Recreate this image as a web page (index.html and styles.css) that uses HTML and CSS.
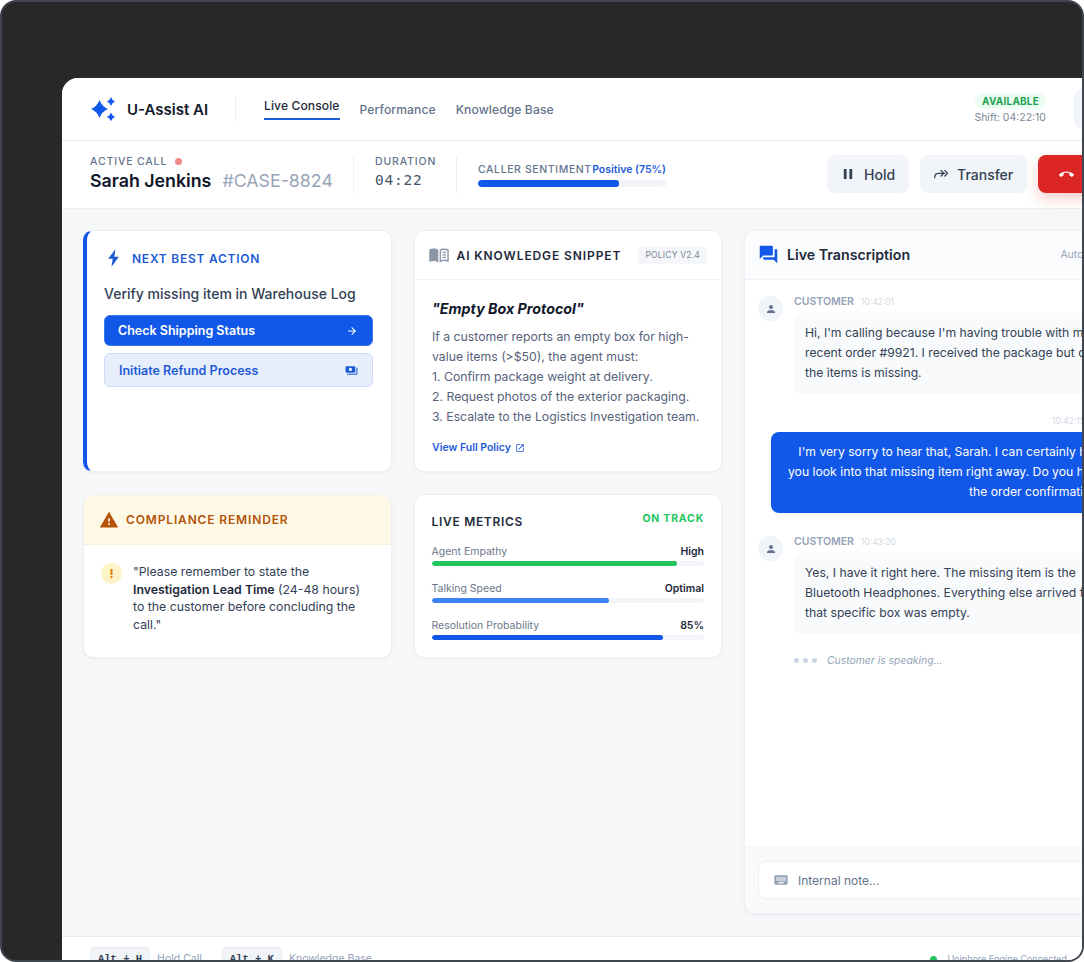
FILE: index.html
```html
<!DOCTYPE html>
<html lang="en">
<head>
<meta charset="utf-8">
<title>U-Assist AI</title>
<link rel="stylesheet" href="styles.css">
</head>
<body>
<div class="frame">
  <div class="app">
    <header class="topbar">
      <div class="brand">
        <svg class="brand-icon" viewBox="0 0 24 24"><path d="M8.500 3Q11 9.500 17 12 11 14.500 8.500 21 6 14.500 0 12 6 9.500 8.500 3z"/><path d="M20 0Q21 3.500 24 4.500 21 5.500 20 9 19 5.500 16 4.500 19 3.500 20 0z"/><path d="M20 15.500Q21 19 24 20 21 21 20 24.500 19 21 16 20 19 19 20 15.500z"/></svg>
        <span class="brand-name">U-Assist AI</span>
      </div>
      <nav class="nav">
        <a class="nav-link active">Live Console</a>
        <a class="nav-link">Performance</a>
        <a class="nav-link">Knowledge Base</a>
      </nav>
      <div class="status">
        <span class="badge-available">AVAILABLE</span>
        <span class="shift">Shift: 04:22:10</span>
      </div>
      <div class="square-btn"></div>
    </header>

    <section class="callbar">
      <div class="caller">
        <div class="label">ACTIVE CALL <i class="rec-dot"></i></div>
        <div class="caller-name"><strong>Sarah Jenkins</strong><span class="case">#CASE-8824</span></div>
      </div>
      <div class="duration">
        <div class="label">DURATION</div>
        <div class="time">04:22</div>
      </div>
      <div class="sentiment">
        <div class="sentiment-head"><span class="sentiment-label">CALLER SENTIMENT</span><span class="sentiment-val">Positive (75%)</span></div>
        <div class="track track-tall"><div class="fill fill-primary" style="width:75%"></div></div>
      </div>
      <div class="actions">
        <button class="action"><svg class="ic14" viewBox="2 2 20 20"><path d="M6 19h4V5H6v14zm8-14v14h4V5h-4z"/></svg>Hold</button>
        <button class="action"><svg class="ic14 stroke" viewBox="2 3 20 20"><path d="M3 19v-1.500c0-3.500 2.500-5.500 6-5.500h9"/><path d="M11.500 7.500 16 12l-4.500 4.500"/><path d="M17 7.500 21.500 12 17 16.500"/></svg>Transfer</button>
        <button class="action action-end"><svg class="ic15" viewBox="0 0 24 24"><path d="M12 9c-1.600 0-3.150.25-4.600.72v3.100c0 .39-.23.74-.56.9-.98.49-1.870 1.120-2.660 1.850-.18.18-.43.28-.7.28-.28 0-.53-.11-.71-.29L.29 13.080c-.18-.17-.29-.42-.29-.7 0-.28.11-.53.29-.71C3.340 8.780 7.460 7 12 7s8.660 1.780 11.710 4.670c.18.18.29.43.29.71 0 .28-.11.53-.29.71l-2.480 2.480c-.18.18-.43.29-.71.29-.27 0-.52-.11-.7-.28-.79-.74-1.690-1.360-2.670-1.850-.33-.16-.56-.5-.56-.9v-3.100C15.150 9.250 13.600 9 12 9z"/></svg>End Call</button>
      </div>
    </section>

    <main class="board">
      <article class="card card-action">
        <h2 class="action-title"><svg class="ic-bolt" viewBox="0 0 15 22"><path d="M10 0 1 12H6.500L5 22 14 9.500H8.500L10 0z"/></svg>NEXT BEST ACTION</h2>
        <p class="action-text">Verify missing item in Warehouse Log</p>
        <button class="wide-btn wide-primary">Check Shipping Status<svg class="ic12" viewBox="0 0 24 24"><path d="M12 4l-1.410 1.410L16.170 11H4v2h12.170l-5.580 5.590L12 20l8-8z"/></svg></button>
        <button class="wide-btn wide-soft">Initiate Refund Process<svg class="ic13" viewBox="0 0 24 24"><path d="M19 14V6c0-1.100-.9-2-2-2H3c-1.100 0-2 .9-2 2v8c0 1.100.9 2 2 2h14c1.100 0 2-.9 2-2zm-9-1c-1.660 0-3-1.340-3-3s1.340-3 3-3 3 1.340 3 3-1.340 3-3 3zm13-6v11c0 1.100-.9 2-2 2H4v-2h17V7h2z"/></svg></button>
      </article>

      <article class="card">
        <header class="card-head">
          <svg class="ic-book" viewBox="0 0 24 20"><path d="M11.200 3.200C9.700 2 7.600 1.500 5.500 1.500c-1.700 0-3.300.3-4.700 1-.3.2-.5.400-.5.800v13.600c0 .6.500.9 1 .7 1.300-.6 2.800-.9 4.200-.9 1.900 0 3.800.5 5.100 1.500l.6.400V3.200z"/><path d="M12.800 3.200c1.500-1.200 3.600-1.700 5.700-1.700 1.700 0 3.300.3 4.700 1 .3.2.5.4.5.8v13.600c0 .6-.5.900-1 .7-1.300-.6-2.800-.9-4.200-.9-1.900 0-3.800.5-5.100 1.500l-.6.400V3.200zm1.600 1v11.600c1.300-.6 2.800-.9 4.100-.9 1.200 0 2.300.2 3.500.5V4.200c-1.100-.5-2.300-.7-3.500-.7-1.500 0-3 .2-4.100.7zm1.600 1.800v1.300c1.500-.5 3.100-.5 4.500-.2V5.800c-1.500-.3-3.100-.2-4.500.2zm0 3v1.300c1.500-.5 3.100-.5 4.500-.2V8.800c-1.500-.3-3.100-.2-4.500.2zm0 3v1.300c1.500-.5 3.100-.5 4.500-.2v-1.300c-1.500-.3-3.100-.2-4.500.2z" fill-rule="evenodd"/></svg>
          <h2 class="snippet-title">AI KNOWLEDGE SNIPPET</h2>
          <span class="policy">POLICY V2.4</span>
        </header>
        <div class="snippet-body">
          <h3 class="protocol">"Empty Box Protocol"</h3>
          <p class="protocol-text">If a customer reports an empty box for high-value items (&gt;$50), the agent must:<br>1. Confirm package weight at delivery.<br>2. Request photos of the exterior packaging.<br>3. Escalate to the Logistics Investigation team.</p>
          <a class="policy-link">View Full Policy<svg class="ic10" viewBox="0 0 24 24"><path d="M19 19H5V5h7V3H5c-1.110 0-2 .9-2 2v14c0 1.100.89 2 2 2h14c1.100 0 2-.9 2-2v-7h-2v7zM14 3v2h3.590l-9.830 9.830 1.410 1.410L19 6.410V10h2V3h-7z"/></svg></a>
        </div>
      </article>

      <section class="card chat">
        <header class="chat-head">
          <svg class="ic-forum" viewBox="0 0 24 24"><path d="M21 6h-2v9H6v2c0 .55.45 1 1 1h11l4 4V7c0-.55-.45-1-1-1zm-4 6V3c0-.55-.45-1-1-1H3c-.55 0-1 .45-1 1v14l4-4h10c.55 0 1-.45 1-1z"/></svg>
          <h2 class="chat-title">Live Transcription</h2>
          <span class="auto">Auto-scroll</span>
        </header>
        <div class="chat-body">
          <div class="msg">
            <div class="avatar"><svg class="ic12" viewBox="0 0 24 24"><path d="M12 12c2.210 0 4-1.790 4-4s-1.790-4-4-4-4 1.790-4 4 1.790 4 4 4zm0 2c-2.670 0-8 1.340-8 4v2h16v-2c0-2.660-5.330-4-8-4z"/></svg></div>
            <div class="msg-main">
              <div class="meta"><b>CUSTOMER</b><span>10:42:01</span></div>
              <p class="bubble">Hi, I'm calling because I'm having trouble with my<br>recent order #9921. I received the package but one of<br>the items is missing.</p>
            </div>
          </div>
          <div class="msg-agent">
            <div class="meta-agent">10:42:15</div>
            <p class="bubble-agent">I'm very sorry to hear that, Sarah. I can certainly help<br>you look into that missing item right away. Do you have<br>the order confirmation?</p>
          </div>
          <div class="msg">
            <div class="avatar"><svg class="ic12" viewBox="0 0 24 24"><path d="M12 12c2.210 0 4-1.790 4-4s-1.790-4-4-4-4 1.790-4 4 1.790 4 4 4zm0 2c-2.670 0-8 1.340-8 4v2h16v-2c0-2.660-5.330-4-8-4z"/></svg></div>
            <div class="msg-main">
              <div class="meta"><b>CUSTOMER</b><span>10:43:20</span></div>
              <p class="bubble">Yes, I have it right here. The missing item is the<br>Bluetooth Headphones. Everything else arrived fine, but<br>that specific box was empty.</p>
            </div>
          </div>
          <div class="typing"><i></i><i></i><i></i><em>Customer is speaking...</em></div>
        </div>
        <footer class="chat-foot">
          <div class="note">
            <svg class="ic-kb" viewBox="0 0 24 24"><path d="M20 5H4c-1.100 0-1.990.9-1.990 2L2 17c0 1.100.9 2 2 2h16c1.100 0 2-.9 2-2V7c0-1.100-.9-2-2-2zm-9 3h2v2h-2V8zm0 3h2v2h-2v-2zM8 8h2v2H8V8zm0 3h2v2H8v-2zm-1 2H5v-2h2v2zm0-3H5V8h2v2zm9 7H8v-2h8v2zm0-4h-2v-2h2v2zm0-3h-2V8h2v2zm3 3h-2v-2h2v2zm0-3h-2V8h2v2z"/></svg>
            <span>Internal note...</span>
          </div>
        </footer>
      </section>

      <article class="card">
        <header class="comp-head">
          <svg class="ic-warn" viewBox="0 0 24 24"><path d="M1 21h22L12 2 1 21zm12-3h-2v-2h2v2zm0-4h-2v-4h2v4z"/></svg>
          <h2 class="comp-title">COMPLIANCE REMINDER</h2>
        </header>
        <div class="comp-body">
          <span class="bang">!</span>
          <p class="comp-text">"Please remember to state the <strong>Investigation Lead Time</strong> (24-48 hours) to the customer before concluding the call."</p>
        </div>
      </article>

      <article class="card metrics">
        <header class="metrics-head"><h2 class="metrics-title">LIVE METRICS</h2><span class="on-track">ON TRACK</span></header>
        <div class="metric">
          <div class="metric-row"><span>Agent Empathy</span><b>High</b></div>
          <div class="track"><div class="fill fill-green" style="width:90%"></div></div>
        </div>
        <div class="metric">
          <div class="metric-row"><span>Talking Speed</span><b>Optimal</b></div>
          <div class="track"><div class="fill fill-blue" style="width:65%"></div></div>
        </div>
        <div class="metric">
          <div class="metric-row"><span>Resolution Probability</span><b>85%</b></div>
          <div class="track"><div class="fill fill-primary" style="width:85%"></div></div>
        </div>
      </article>
    </main>

    <footer class="statusbar">
      <kbd class="key">Alt + H</kbd><span class="key-label">Hold Call</span>
      <kbd class="key key-second">Alt + K</kbd><span class="key-label">Knowledge Base</span>
      <span class="engine"><i class="engine-dot"></i>Uniphore Engine Connected</span>
    </footer>
  </div>
</div>
</body>
</html>
```
FILE: styles.css
```css
* { box-sizing: border-box; }
html, body { margin: 0; padding: 0; background: #fff; }
body { font-family: Inter, "Liberation Sans", sans-serif; color: #1e293b; }
h2, h3, p { margin: 0; }
svg { fill: currentColor; flex: none; display: block; }

.frame {
  width: 1084px; height: 962px;
  background: #282828;
  border: 2px solid #3f4650;
  border-radius: 16px;
  overflow: hidden;
  padding: 76px 0 0 60px;
}
.app {
  width: 1094px; height: 902px;
  background: #f6f7f9;
  border-radius: 16px 0 0 0;
  display: flex; flex-direction: column;
  overflow: hidden;
}

/* top bar */
.topbar {
  height: 63px; flex: none;
  background: #fff;
  border-bottom: 1px solid #e8ecf2;
  display: flex; align-items: center;
  padding: 0 0 0 28px;
}
.brand { display: flex; align-items: center; gap: 12px; width: 146px; height: 24px; border-right: 1px solid #e8ecf2; }
.brand-icon { width: 24px; height: 24px; margin-left: 1px; color: #1258e8; }
.brand-name { font-size: 15px; font-weight: 600; color: #0f172a; }
.nav { display: flex; align-items: center; gap: 20px; margin-left: 28px; }
.nav-link { font-size: 12.100px; font-weight: 500; color: #64748b; letter-spacing: .1px; }
.nav-link.active { color: #1e293b; padding-bottom: 5px; border-bottom: 2px solid #1d5ad6; }
.status { margin-left: auto; display: flex; flex-direction: column; align-items: flex-end; gap: 2px; }
.badge-available { font-size: 10px; font-weight: 700; color: #22a352; background: #ecfdf3; border-radius: 8px; padding: 2px 7px; line-height: 12px; letter-spacing: .2px; }
.shift { font-size: 10.500px; color: #7c8798; line-height: 14px; }
.square-btn { width: 40px; height: 40px; margin: 0 42px 0 28px; border-radius: 8px; background: #f1f5f9; }

/* call bar */
.callbar {
  height: 68px; flex: none;
  background: #fff;
  border-bottom: 1px solid #eceff3;
  display: flex; align-items: center;
  padding: 0 0 0 28px;
}
.callbar > * { flex: none; }
.label { font-size: 10.500px; font-weight: 500; color: #64748b; letter-spacing: .85px; line-height: 9px; white-space: nowrap; margin-bottom: 3px; }
.rec-dot { display: inline-block; width: 7px; height: 7px; border-radius: 50%; background: #f08a8a; margin-left: 4px; }
.caller { width: 264px; height: 36px; border-right: 1px solid #eceff3; }
.caller-name { display: flex; gap: 11px; align-items: baseline; line-height: 24px; }
.caller-name strong { font-size: 17.800px; font-weight: 600; color: #0f172a; }
.case { font-size: 17.800px; color: #98a4b8; }
.duration { width: 103px; height: 36px; padding-left: 21px; border-right: 1px solid #eceff3; }
.time { font-family: "DejaVu Sans Mono", "Liberation Mono", monospace; font-size: 14.500px; color: #475569; line-height: 22px; letter-spacing: .8px; }
.sentiment { width: 188px; margin-left: 21px; }
.sentiment-head { display: flex; justify-content: space-between; align-items: center; height: 14px; margin-bottom: 3px; }
.sentiment-label { font-size: 10.500px; font-weight: 500; color: #64748b; letter-spacing: .6px; white-space: nowrap; }
.sentiment-val { font-size: 10.500px; font-weight: 600; color: #1d5ad6; white-space: nowrap; }
.track { height: 5px; background: #f1f5f9; border-radius: 3px; overflow: hidden; }
.track-tall { height: 7px; border-radius: 4px; }
.fill { height: 100%; border-radius: 3px; }
.fill-primary { background: #1258e8; }
.fill-green { background: #22c55e; }
.fill-blue { background: #3b82f6; }
.actions { display: flex; gap: 11px; margin-left: 161px; margin-top: -1px; }
.action {
  height: 38px; border: 0; border-radius: 8px;
  background: #f1f5f9; color: #334155;
  font: 500 14px Inter, sans-serif;
  display: flex; align-items: center; gap: 9px;
  padding: 0 14px;
  white-space: nowrap;
}
.action-end { background: #dc2626; color: #fff; box-shadow: 0 6px 14px rgba(220, 38, 38, .22); padding: 0 21px; }
.ic14 { width: 14px; height: 14px; }
.ic15 { width: 15px; height: 15px; }
.ic12 { width: 12px; height: 12px; }
.ic13 { width: 13px; height: 13px; }
.ic10 { width: 10px; height: 10px; }
.stroke { fill: none; stroke: currentColor; stroke-width: 1.800; }

/* board */
.board {
  flex: 1; min-height: 0;
  display: grid;
  grid-template-columns: 308.500px 308.500px 1fr;
  grid-template-rows: 242px 164px 1fr;
  column-gap: 22px; row-gap: 22px;
  padding: 21px 21px 22px;
}
.card {
  background: #fff;
  border: 1px solid #edf0f4;
  border-radius: 10px;
  box-shadow: 0 1px 3px rgba(15, 23, 42, .05);
  overflow: hidden;
  min-width: 0;
}

.card-action { border-left: 4px solid #1258e8; padding: 16px 18px 0 17px; }
.action-title { display: flex; align-items: center; gap: 11px; font-size: 12px; font-weight: 600; letter-spacing: .75px; color: #1d5ad6; margin-left: 2px; height: 22px; }
.ic-bolt { width: 15px; height: 18px; color: #1d5ad6; }
.action-text { font-size: 14px; font-weight: 500; color: #334155; margin-top: 16px; line-height: 18px; }
.wide-btn {
  width: 100%; display: flex; justify-content: space-between; align-items: center;
  border-radius: 6px; font: 600 12.500px Inter, sans-serif;
}
.wide-primary { height: 31px; margin-top: 12px; background: #1258e8; border: 1px solid #3b78ee; color: #fff; padding: 0 14px 0 13px; }
.wide-soft { height: 34px; margin-top: 7px; background: #e7eefc; border: 1px solid #cddcf7; color: #1d5ad6; padding: 0 14px; }

.card-head { height: 49px; display: flex; align-items: center; padding: 0 14px; border-bottom: 1px solid #f1f4f7; }
.ic-book { width: 20px; height: 17px; color: #8b97a8; }
.snippet-title { font-size: 12px; font-weight: 600; letter-spacing: .9px; color: #1e293b; margin-left: 8px; }
.policy { margin-left: auto; font-size: 8.500px; color: #7c8798; background: #f4f6f9; border-radius: 4px; padding: 0 7px; line-height: 17px; letter-spacing: .2px; }
.snippet-body { padding: 19px 17.500px 0; }
.protocol { font-size: 14.250px; font-style: italic; font-weight: 700; color: #0f172a; line-height: 20px; }
.protocol-text { font-size: 12.250px; line-height: 20px; color: #56627a; margin-top: 8px; }
.policy-link { display: flex; align-items: center; gap: 4px; margin-top: 14px; font-size: 10.500px; font-weight: 600; color: #1d5ad6; line-height: 14px; }

.comp-head { height: 50px; background: #fef9e7; display: flex; align-items: center; gap: 7px; padding: 0 15px; border-bottom: 1px solid #f6f0dc; }
.ic-warn { width: 20px; height: 20px; color: #b45309; }
.comp-title { font-size: 12px; font-weight: 600; letter-spacing: .85px; color: #b45309; }
.comp-body { display: flex; gap: 11px; padding: 18px 17px 0; }
.bang { flex: none; width: 21px; height: 21px; border-radius: 50%; background: #fef3c7; color: #d97706; font-size: 12px; font-weight: 700; text-align: center; line-height: 21px; }
.comp-text { font-size: 12.300px; line-height: 17.500px; color: #334155; }
.comp-text strong { font-weight: 600; color: #1e293b; }

.metrics { padding: 0 17px; }
.metrics-head { display: flex; justify-content: space-between; padding-top: 18px; height: 49px; }
.metrics-title { font-size: 12px; font-weight: 600; letter-spacing: .7px; color: #1e293b; line-height: 18px; }
.on-track { font-size: 10.500px; font-weight: 700; letter-spacing: .8px; color: #22c55e; line-height: 12px; }
.metric { margin-bottom: 15px; }
.metric-row { display: flex; justify-content: space-between; font-size: 10.500px; line-height: 16px; color: #6b7789; margin-bottom: 1px; }
.metric-row b { font-weight: 600; color: #1e293b; }

/* chat */
.chat { grid-column: 3; grid-row: 1 / span 3; display: flex; flex-direction: column; }
.chat-head { height: 49px; flex: none; display: flex; align-items: center; padding: 0 19px 2px 13px; background: #fbfcfd; border-bottom: 1px solid #f1f4f7; }
.ic-forum { width: 21px; height: 21px; color: #1258e8; }
.chat-title { font-size: 14.200px; font-weight: 600; color: #1e293b; margin-left: 8px; }
.auto { font-size: 10.500px; color: #94a3b8; margin-left: auto; }
.chat-body { flex: 1; padding: 16px 13px 0; }
.msg { display: flex; gap: 11px; }
.avatar { flex: none; width: 25px; height: 25px; border-radius: 50%; background: #f1f5f9; color: #64748b; display: flex; align-items: center; justify-content: center; }
.msg-main { flex: 1; min-width: 0; }
.meta { display: flex; align-items: center; gap: 7px; height: 11px; margin-bottom: 6px; }
.meta b { font-size: 10.500px; font-weight: 600; color: #94a3b8; line-height: 11px; }
.meta span { font-size: 8.500px; color: #d3dae4; }
.bubble { background: #f8fafc; border-radius: 8px; padding: 10px 11px 11px; font-size: 12.200px; line-height: 20px; color: #334155; white-space: nowrap; }
.msg-agent { margin: 22px 0 23px 13px; }
.meta-agent { text-align: right; font-size: 8.500px; color: #d3dae4; line-height: 11px; margin-bottom: 5px; padding-right: 36px; }
.bubble-agent { background: #1258e8; border-radius: 8px; padding: 10px 17px 11px; font-size: 12.200px; line-height: 20px; color: #fff; text-align: right; white-space: nowrap; }
.typing { display: flex; align-items: center; gap: 4px; margin: 19px 0 0 36px; height: 14px; }
.typing i { width: 5px; height: 5px; border-radius: 50%; background: #cbd5e1; }
.typing em { font-size: 10.400px; color: #94a3b8; margin-left: 6px; }
.chat-foot { flex: none; height: 67px; background: #f8fafc; padding: 14px 13px 0; border-top: 1px solid #f1f4f7; }
.note { height: 38px; background: #fff; border: 1px solid #edf0f4; border-radius: 8px; display: flex; align-items: center; gap: 9px; padding: 0 14px; font-size: 12px; color: #64748b; }
.ic-kb { width: 16px; height: 16px; color: #94a3b8; }

/* status bar */
.statusbar { flex: none; height: 44px; background: #fff; border-top: 1px solid #e8ecf2; display: flex; align-items: flex-start; padding: 10px 0 0 28px; }
.key { font-family: "Liberation Mono", monospace; font-size: 10.500px; font-weight: 700; color: #334155; background: #f1f5f9; border: 1px solid #e8ecf2; border-radius: 4px; padding: 0 7px; line-height: 22px; }
.key-label { font-size: 10.500px; color: #94a3b8; margin-left: 7px; line-height: 24px; }
.key-second { margin-left: 20px; }
.engine { margin-left: auto; margin-right: 89px; display: flex; align-items: center; gap: 10px; font-size: 9px; color: #94a3b8; line-height: 24px; }
.engine-dot { width: 7px; height: 7px; border-radius: 50%; background: #22c55e; }
```
